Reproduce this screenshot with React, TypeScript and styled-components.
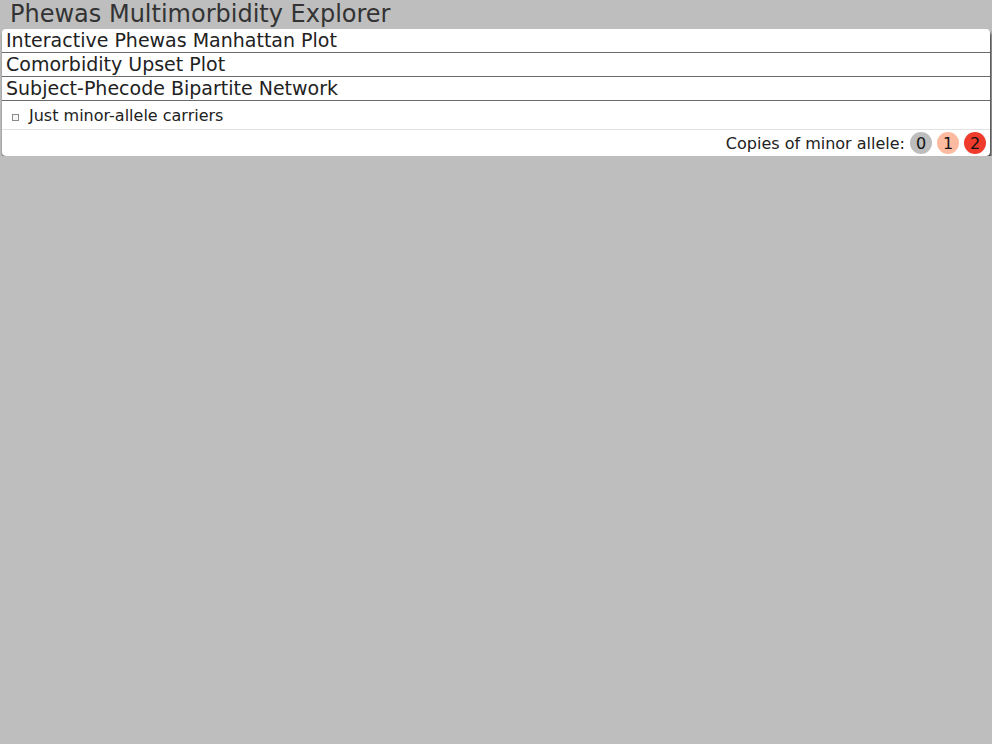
import React from "react";
import styled, { createGlobalStyle } from "styled-components";

const Global = createGlobalStyle`
  html, body {
    margin: 0;
    padding: 0;
    background: #bebebe;
    font-family: "DejaVu Sans", sans-serif;
    font-size: 16px;
    color: #222;
  }
`;

const Page = styled.div`
  display: flex;
  flex-direction: column;
  padding: 0 2px;
`;

const Title = styled.h1`
  margin: 0;
  padding: 0 0 0 8px;
  height: 29px;
  font-size: 24px;
  font-weight: normal;
  line-height: 29px;
  color: #333;
`;

const Panel = styled.div`
  display: flex;
  flex-direction: column;
  background: #fff;
  border-radius: 4px;
  box-shadow: 1px 3px 3px rgba(0, 0, 0, 0.8);
`;

const SectionHeader = styled.div`
  height: 23px;
  padding-left: 4px;
  font-size: 19px;
  line-height: 23px;
  color: #222;
  border-bottom: 1px solid #6b6b6b;
`;

const CheckRow = styled.label`
  display: flex;
  align-items: center;
  height: 28px;
  padding-left: 10px;
  gap: 10px;
  border-bottom: 1px solid #e3e3e3;
  font-size: 16px;
`;

const Box = styled.span`
  width: 5px;
  height: 5px;
  margin-top: 4px;
  border: 1px solid #8a8a8a;
  background: #f6f6f6;
`;

const LegendRow = styled.div`
  display: flex;
  align-items: center;
  justify-content: flex-end;
  height: 26px;
  padding-right: 4px;
  gap: 5px;
`;

const Dot = styled.span<{ $bg: string }>`
  display: inline-flex;
  align-items: center;
  justify-content: center;
  width: 22px;
  height: 22px;
  border-radius: 11px;
  background: ${(p) => p.$bg};
  color: #111;
  font-size: 16px;
`;

export default function App() {
  return (
    <>
      <Global />
      <Page>
        <Title>Phewas Multimorbidity Explorer</Title>
        <Panel>
          <SectionHeader>Interactive Phewas Manhattan Plot</SectionHeader>
          <SectionHeader>Comorbidity Upset Plot</SectionHeader>
          <SectionHeader>Subject-Phecode Bipartite Network</SectionHeader>
          <CheckRow>
            <Box />
            <span>Just minor-allele carriers</span>
          </CheckRow>
          <LegendRow>
            <span>Copies of minor allele:</span>
            <Dot $bg="#bdbdbd">0</Dot>
            <Dot $bg="#fcbba1">1</Dot>
            <Dot $bg="#ef3b2c">2</Dot>
          </LegendRow>
        </Panel>
      </Page>
    </>
  );
}
